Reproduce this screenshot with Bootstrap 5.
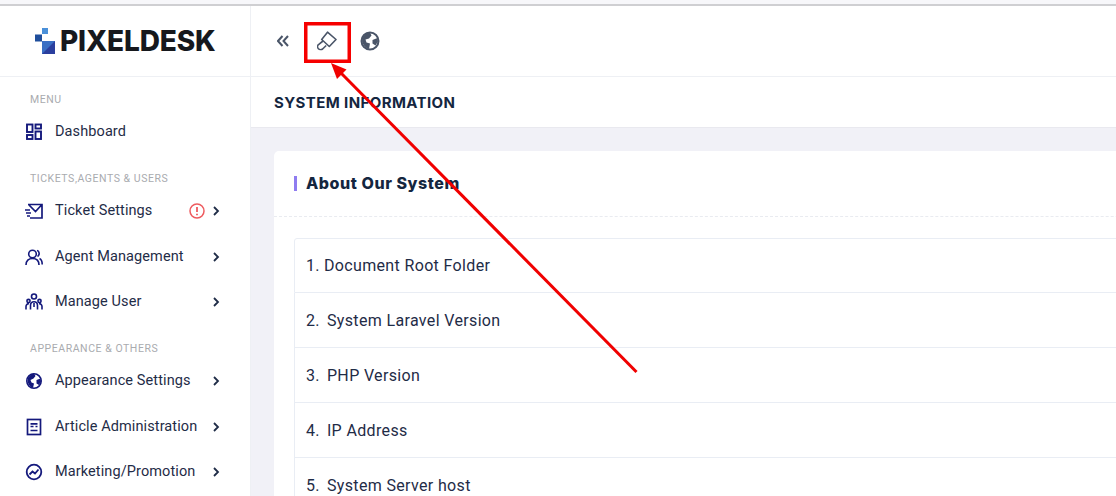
<!DOCTYPE html>
<html lang="en">
<head>
<meta charset="utf-8">
<title>System Information</title>
<link href="https://cdn.jsdelivr.net/npm/bootstrap@5.3.0/dist/css/bootstrap.min.css" rel="stylesheet">
<style>
html,body{height:496px;overflow:hidden;background:#fff}
body{font-family:"Roboto","Liberation Sans",sans-serif;color:#1f2c47;position:relative}
.browser-strip{height:6px;background:#f7f7fa;border-bottom:2px solid #cfcfd2}
.app-shell{height:490px;overflow:hidden}
.side-col{width:251px;flex:0 0 251px;border-right:1px solid #eef0f4}
.logo-box{height:71px;border-bottom:1px solid #eef0f4;padding-left:35px}
.logo-word{font-family:"Inter","Liberation Sans",sans-serif;font-weight:800;font-size:28px;line-height:1;color:#16181d;letter-spacing:-.15px;margin-left:4px}
.side-label{font-size:10.5px;line-height:16.5px;letter-spacing:.55px;color:#a9abaf;text-transform:uppercase;padding:16px 0 1px 30px;font-weight:400}
.side-label.first{padding-top:15px}
.side-item{height:45.5px;padding:0 30px 0 25px;font-size:14.5px;letter-spacing:.1px;color:#1f2c47;text-decoration:none}
.side-icon{width:18px;height:18px;margin-right:12px;flex:none;color:#14197c}
.chev{width:8px;height:10px;color:#1f2c47;flex:none}
.warn-icon{width:16px;height:16px;margin-right:7px;flex:none}
.main-col{min-width:0;flex:1 1 auto}
.top-bar{height:71px;flex:none;border-bottom:1px solid #eef0f4;padding-left:26px}
.tool-icon{color:#4a5568;flex:none}
.gap-brush{margin-left:28px}
.gap-globe{margin-left:23px}
.title-bar{height:51px;flex:none;padding:2px 0 0 23px;border-bottom:1px solid #e9e9ef;font-family:"Inter","Liberation Sans",sans-serif;font-weight:700;font-size:15px;letter-spacing:.4px;color:#14263f}
.title-bar h1{font:inherit;margin:0;text-transform:uppercase}
.canvas{background:#f1f1f7;padding:23px 0 0 23px;flex:1 1 auto}
.info-panel{width:1000px;border:0;border-radius:5px 0 0 0;background:#fff}
.info-head{height:66px;flex:none;padding-left:20px;border-bottom:1px dashed #e9ebf0}
.info-head h2{font-family:"Inter","Liberation Sans",sans-serif;font-weight:800;font-size:16px;letter-spacing:.55px;color:#14263f;margin:0;border-left:3px solid #8f7cf0;padding-left:9px;line-height:15px}
.info-body{padding:21px 0 0 20px}
.info-list{border-radius:3px 0 0 0}
.info-list .list-group-item{height:55px;padding:0 11px;font-size:16px;letter-spacing:.35px;color:#1f2c47;border-color:#e9edf4;display:flex;align-items:center}
.info-list .list-group-item + .list-group-item{padding-top:2px}
.num{margin-right:7px}
.list-group-item:first-child .num{margin-right:4px}
.note-layer{position:absolute;left:0;top:0;pointer-events:none}
</style>
</head>
<body>
<div class="browser-strip"></div>
<div class="app-shell d-flex">
  <aside class="side-col">
    <div class="logo-box d-flex align-items-center">
      <svg width="21" height="27" viewBox="0 0 21 27" aria-hidden="true"><rect x="0" y="6.500" width="7" height="7" fill="#1f4e9c"/><rect x="7" y="0" width="6" height="6" fill="#4a90d9"/><rect x="7" y="13" width="13" height="13" fill="#2b3f9e"/><path d="M7 26L20 13H7z" fill="#3a6fc4"/></svg>
      <span class="logo-word">PIXELDESK</span>
    </div>
    <div class="side-label first">Menu</div>
    <a class="side-item d-flex align-items-center" href="#"><svg class="side-icon" viewBox="0 0 18 18" fill="none" stroke="currentColor" stroke-width="1.9"><rect x="2" y="1.500" width="5.500" height="7.500"/><rect x="10.500" y="1.500" width="5.500" height="4"/><rect x="2" y="12" width="5.500" height="4"/><rect x="10.500" y="8.500" width="5.500" height="7.500"/></svg><span>Dashboard</span></a>
    <div class="side-label">Tickets,Agents &amp; Users</div>
    <a class="side-item d-flex align-items-center" href="#"><svg class="side-icon" viewBox="0 0 18 18" fill="none" stroke="currentColor" stroke-width="1.700"><path d="M3 2.500h14v13.500H5M4 3l6.500 6.500L16.500 3M0 8h5M1 11h5M2 14h3"/></svg><span class="flex-grow-1">Ticket Settings</span><svg class="warn-icon" viewBox="0 0 16 16" fill="none" stroke="#ee5b5f" stroke-width="1.500"><circle cx="8" cy="8" r="7"/><path d="M8 4v5M8 10.800v1.400" stroke-width="1.800"/></svg><svg class="chev" viewBox="0 0 8 10" fill="none" stroke="currentColor" stroke-width="1.800"><path d="M2 1l4 4-4 4"/></svg></a>
    <a class="side-item d-flex align-items-center" href="#"><svg class="side-icon" viewBox="0 0 18 18" fill="none" stroke="currentColor" stroke-width="1.600"><circle cx="7.500" cy="6" r="3.800"/><path d="M1 17c0-4.200 2.600-6.500 6.500-6.500S14 12.800 14 17M12 2.500c2.500.5 3 4.500.5 6M14.500 10.500c1.800.8 2.700 3 2.700 6"/></svg><span class="flex-grow-1">Agent Management</span><svg class="chev" viewBox="0 0 8 10" fill="none" stroke="currentColor" stroke-width="1.800"><path d="M2 1l4 4-4 4"/></svg></a>
    <a class="side-item d-flex align-items-center" href="#"><svg class="side-icon" viewBox="0 0 18 18" fill="none" stroke="currentColor" stroke-width="1.600"><circle cx="9" cy="3.500" r="2.500"/><circle cx="3.500" cy="8" r="1.600"/><circle cx="14.500" cy="8" r="1.600"/><path d="M5.500 16.500v-4c0-5 7-5 7 0v4M9 10v4M1 16.500v-3c0-2 1.500-3 3-2.800M17 16.500v-3c0-2-1.500-3-3-2.800"/></svg><span class="flex-grow-1">Manage User</span><svg class="chev" viewBox="0 0 8 10" fill="none" stroke="currentColor" stroke-width="1.800"><path d="M2 1l4 4-4 4"/></svg></a>
    <div class="side-label">Appearance &amp; Others</div>
    <a class="side-item d-flex align-items-center" href="#"><svg class="side-icon" viewBox="0 0 18 18"><circle cx="9" cy="9" r="7.200" fill="none" stroke="currentColor" stroke-width="1.600"/><path fill="currentColor" d="M3 6c2-3 4-4.500 6-4.500l1.500 2.500-2 2.500L5.500 8l1 2.500 2.500 1-1 4.500C5 15 3 12 2.500 9zM11.500 8l4-1.500.5 3-2 3.500-2.500-1.500z"/></svg><span class="flex-grow-1">Appearance Settings</span><svg class="chev" viewBox="0 0 8 10" fill="none" stroke="currentColor" stroke-width="1.800"><path d="M2 1l4 4-4 4"/></svg></a>
    <a class="side-item d-flex align-items-center" href="#"><svg class="side-icon" viewBox="0 0 18 18" fill="none" stroke="currentColor" stroke-width="1.700"><rect x="2.500" y="1.500" width="13" height="15"/><path d="M5.500 5.800h7M5.500 8.500h3M10.500 8.500h2M5.500 12.500h7" stroke-width="1.700"/></svg><span class="flex-grow-1">Article Administration</span><svg class="chev" viewBox="0 0 8 10" fill="none" stroke="currentColor" stroke-width="1.800"><path d="M2 1l4 4-4 4"/></svg></a>
    <a class="side-item d-flex align-items-center" href="#"><svg class="side-icon" viewBox="0 0 18 18" fill="none" stroke="currentColor" stroke-width="1.800"><circle cx="9" cy="9" r="7.300"/><path d="M4.500 11.500l3-3 2.500 2 3.500-4"/></svg><span class="flex-grow-1">Marketing/Promotion</span><svg class="chev" viewBox="0 0 8 10" fill="none" stroke="currentColor" stroke-width="1.800"><path d="M2 1l4 4-4 4"/></svg></a>
  </aside>
  <main class="main-col d-flex flex-column">
    <div class="top-bar d-flex align-items-center">
      <svg class="tool-icon" width="12" height="12" viewBox="0 0 12 12" fill="none" stroke="currentColor" stroke-width="2"><path d="M5.500 1L1 6l4.500 5M11 1L6.500 6l4.500 5"/></svg>
      <svg class="tool-icon gap-brush" width="20" height="20" viewBox="0 0 20 20" fill="none" stroke="currentColor" stroke-width="1.600" stroke-linejoin="round"><path d="M10.500 1.200L19 8.500l-6.700 7L4.700 8.500z"/><path d="M6 10l-4.800 3.800c-.8 1-.7 3 .2 3.900s3 1.200 4.200.3l3.600-3.500"/></svg>
      <svg class="tool-icon gap-globe" width="20" height="20" viewBox="0 0 20 20"><circle cx="10" cy="10" r="8.500" fill="none" stroke="currentColor" stroke-width="2"/><path fill="currentColor" d="M2.500 7C4.500 3 7.500 1.500 10 1.500l1.500 3-2.500 3-3.500 1 1 3 3.500 1-1 5.500C5 17 2.500 13 2 10zM12.500 9l5-2 .5 3.500-2.500 4-3-2z"/></svg>
    </div>
    <div class="title-bar d-flex align-items-center"><h1>System Information</h1></div>
    <div class="canvas">
      <section class="card info-panel">
        <div class="info-head d-flex align-items-center"><h2>About Our System</h2></div>
        <div class="info-body">
          <ul class="list-group info-list">
            <li class="list-group-item"><span class="num">1.</span>Document Root Folder</li>
            <li class="list-group-item"><span class="num">2.</span>System Laravel Version</li>
            <li class="list-group-item"><span class="num">3.</span>PHP Version</li>
            <li class="list-group-item"><span class="num">4.</span>IP Address</li>
            <li class="list-group-item"><span class="num">5.</span>System Server host</li>
          </ul>
        </div>
      </section>
    </div>
  </main>
</div>
<svg class="note-layer" width="1116" height="496" viewBox="0 0 1116 496" aria-hidden="true">
  <rect x="305.750" y="23.750" width="43.500" height="37.500" fill="none" stroke="#f60000" stroke-width="3.500"/>
  <path d="M636.500 372L340 72" stroke="#f00000" stroke-width="3" fill="none"/>
  <path d="M331 63l15.500 6.500-9.500 9.500z" fill="#f00000"/>
</svg>
</body>
</html>
